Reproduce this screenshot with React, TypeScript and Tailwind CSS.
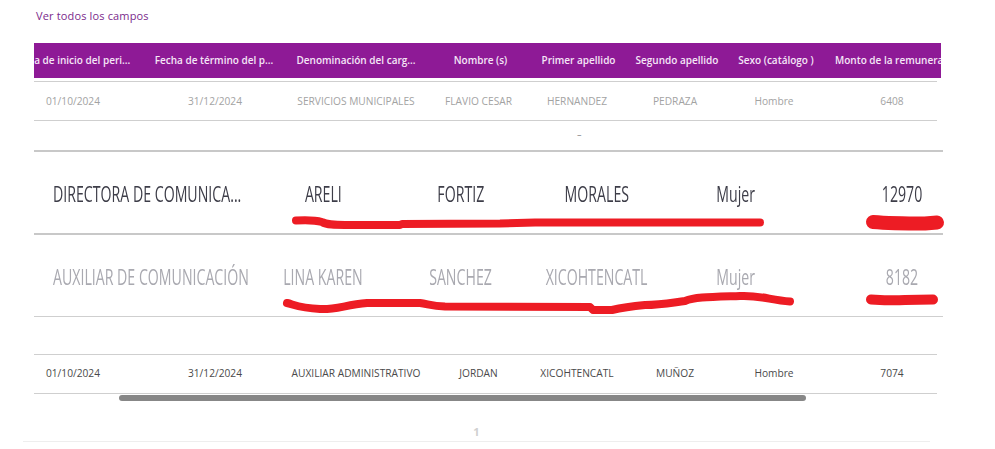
const headWidths = ["w-[134px]", "w-[152px]", "w-[132px]", "w-[117px]", "w-[79px]", "w-[118px]", "w-[80px]", "w-[148px]"];
const bodyWidths = ["w-[138px]", "w-[146px]", "w-[136px]", "w-[109px]", "w-[88px]", "w-[108px]", "w-[90px]", "w-[146px]"];

const headers = [
  "Fecha de inicio del peri...",
  "Fecha de término del p...",
  "Denominación del carg...",
  "Nombre (s)",
  "Primer apellido",
  "Segundo apellido",
  "Sexo (catálogo )",
  "Monto de la remuneración",
];

const firstRow = ["01/10/2024", "31/12/2024", "SERVICIOS MUNICIPALES", "FLAVIO CESAR", "HERNANDEZ", "PEDRAZA", "Hombre", "6408"];
const lastRow = ["01/10/2024", "31/12/2024", "AUXILIAR ADMINISTRATIVO", "JORDAN", "XICOHTENCATL", "MUÑOZ", "Hombre", "7074"];

const pastedWidths = ["w-[226px]", "w-[126px]", "w-[150px]", "w-[122px]", "w-[156px]", "w-[176px]"];

const Cells = ({ values, widths }: { values: string[]; widths: string[] }) => (
  <div className="-ml-[30px] flex h-full w-[960px] items-center">
    {values.map((value, i) => (
      <div key={i} className={`${widths[i]} shrink-0 overflow-hidden whitespace-nowrap text-center`}>
        {value}
      </div>
    ))}
  </div>
);

const HeadCells = () => (
  <div className="-ml-[30px] flex h-full w-[970px] items-center">
    {headers.map((value, i) =>
      i === 7 ? (
        <div key={i} className="shrink-0 whitespace-nowrap pl-[19px]">
          {value}
        </div>
      ) : (
        <div key={i} className={`${headWidths[i]} shrink-0 whitespace-nowrap text-center`}>
          {value}
        </div>
      )
    )}
  </div>
);

const PastedRow = ({ values, className }: { values: string[]; className: string }) => (
  <div className={`flex h-[81px] items-center overflow-hidden pt-[3px] text-[21px] leading-none blur-[0.3px] ${className}`}>
    {values.map((value, i) => (
      <div key={i} className={`${pastedWidths[i]} flex shrink-0 whitespace-nowrap ${i === 0 ? "justify-start pl-[19px]" : "justify-center"}`}>
        <span className={`inline-block scale-x-[0.674] ${i === 0 ? "origin-left" : ""}`}>{value}</span>
      </div>
    ))}
  </div>
);

export default function App() {
  return (
    <div className="relative h-[449px] w-[995px] overflow-hidden bg-white font-['Open_Sans',sans-serif]">
      <a href="#" className="ml-[36px] block pt-[8px] pb-[1px] text-[11px] leading-[15px] tracking-[0.15px] text-[#7b2a8c]">
        Ver todos los campos
      </a>

      <div className="mt-[19px] pl-[34px]">
        {/* table head */}
        <div className="h-[35px] w-[907px] overflow-hidden bg-[#8e1a96] text-[10px] font-semibold text-[#f5e6f6]">
          <HeadCells />
        </div>

        <div className="mt-[3px] h-[40px] w-[903px] overflow-hidden border-y border-[#cfcfcf] pt-[2px] text-[10.2px] text-[#a3a3a3]">
          <Cells values={firstRow} widths={bodyWidths} />
        </div>

        <div className="relative h-[29px] w-[903px]">
          <span className="absolute left-[543px] top-[10px] text-[8px] leading-none text-[#555]">~</span>
        </div>

        {/* pasted part of the capture */}
        <div className="w-[909px] border-y-2 border-[#c8c8c8]">
          <PastedRow values={["DIRECTORA DE COMUNICA...", "ARELI", "FORTIZ", "MORALES", "Mujer", "12970"]} className="text-[#3d3d48]" />
        </div>
        <div className="h-[82px] w-[909px] border-b border-[#cfcfcf]">
          <PastedRow values={["AUXILIAR DE COMUNICACIÓN", "LINA KAREN", "SANCHEZ", "XICOHTENCATL", "Mujer", "8182"]} className="text-[#a9a9b0]" />
        </div>

        <div className="mt-[37px] h-[40px] w-[903px] overflow-hidden border-y border-[#cfcfcf] text-[10.2px] text-[#4a4a4a]">
          <Cells values={lastRow} widths={bodyWidths} />
        </div>

        {/* scrollbar */}
        <div className="ml-[85px] mt-[1px] h-[6px] w-[687px] rounded-full bg-[#878787]" />
      </div>

      {/* pagination */}
      <div className="ml-[23px] mt-[22px] h-[19px] w-[907px] border-b border-[#eeeeee] text-center text-[11px] font-bold leading-[18px] text-[#d0d0d0]">
        1
      </div>

      {/* red marker scribbles over the capture */}
      <svg className="absolute left-0 top-0" width="995" height="449" viewBox="0 0 995 449" fill="none" stroke="#ed1c24" strokeLinecap="round" strokeLinejoin="round">
        <path strokeWidth="8" d="M296 220.5 C305 220 315 220 322 222 C327 225 335 225 345 225 L400 225 L402 224 L500 223.5 L535 222.5 L760 222.5" />
        <path strokeWidth="14" d="M873 222 C885 223 900 223.5 925 223.5 L937 222.5" />
        <path strokeWidth="8" d="M287 303 C295 305 300 308 320 309 C335 310 345 305 367 303 L420 303 C428 304 432 306 445 306.5 L590 307 L593 310 L612 310 C625 307 635 306 645 305 C660 305 670 303 685 301 C695 297 710 297 740 296 C760 295 770 300 790 301.5" />
        <path strokeWidth="10" d="M871 299.5 C880 300 890 301 905 300 L933 299.5" />
      </svg>
    </div>
  );
}
